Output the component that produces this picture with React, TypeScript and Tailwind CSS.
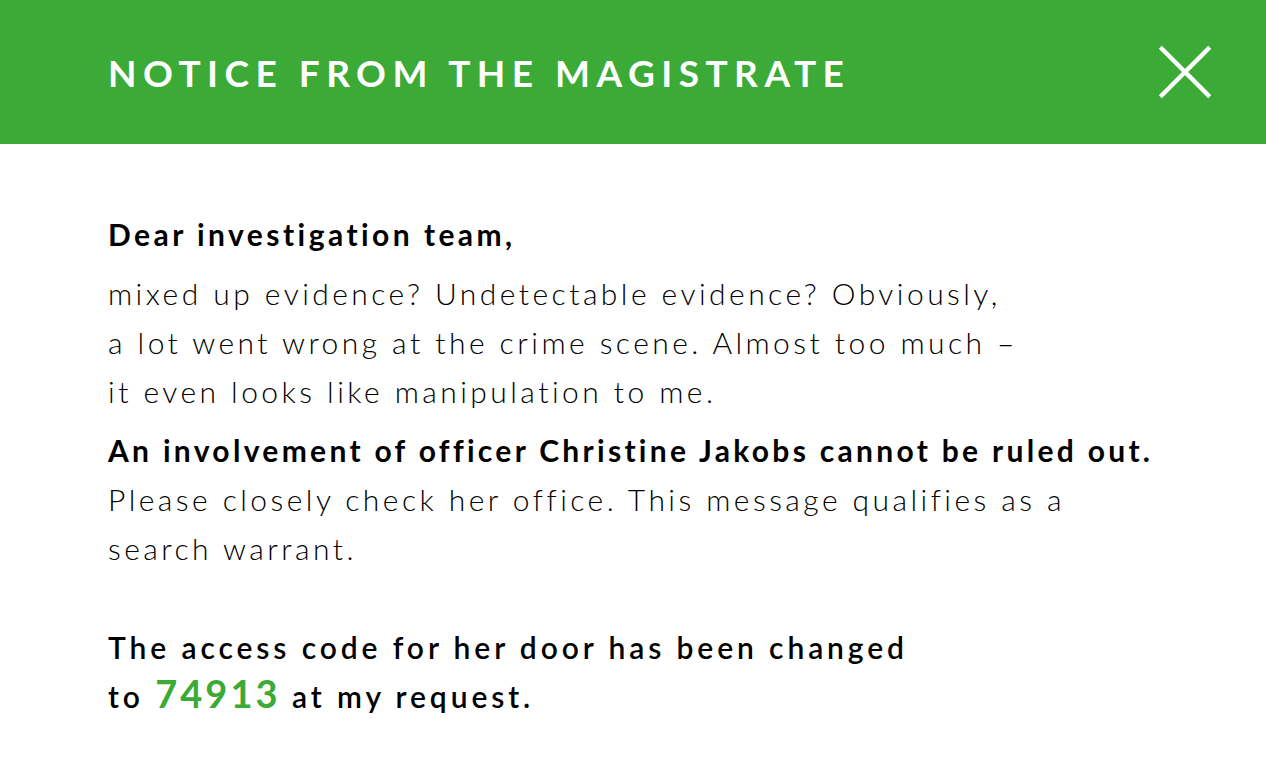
export default function App() {
  return (
    <div className="min-h-[784px] w-full bg-white font-['Lato','Open_Sans',sans-serif] text-black">
      <header className="flex h-[144px] items-center justify-between bg-[#3caa36] pl-[108px] pr-[54px]">
        <h1 className="text-[37px] font-bold uppercase leading-none tracking-[0.175em] text-white">
          Notice from the Magistrate
        </h1>
        <svg viewBox="0 0 56 56" className="h-[54px] w-[54px]" aria-hidden>
          <path d="M4 4 L52 52 M52 4 L4 52" stroke="white" strokeWidth="4.5" strokeLinecap="square" />
        </svg>
      </header>

      <main className="px-[108px] pt-[66px] text-[30px] leading-[49px] tracking-[0.115em]">
        <p className="font-bold">Dear investigation team,</p>
        <p className="mt-[10px] font-light">
          mixed up evidence? Undetectable evidence? Obviously,
          <br />
          a lot went wrong at the crime scene. Almost too much –
          <br />
          it even looks like manipulation to me.
        </p>
        <p className="mt-[10px] font-bold tracking-[0.11em]">
          An involvement of officer Christine Jakobs cannot be ruled out.
        </p>
        <p className="font-light">
          Please closely check her office. This message qualifies as a
          <br />
          search warrant.
        </p>
        <p className="mt-[50px] font-semibold tracking-[0.13em]">
          The access code for her door has been changed
          <br />
          to{" "}
          <span className="text-[38px] font-bold leading-none tracking-[0.08em] text-[#3caa36]">74913</span>{" "}
          at my request.
        </p>
      </main>
    </div>
  );
}
